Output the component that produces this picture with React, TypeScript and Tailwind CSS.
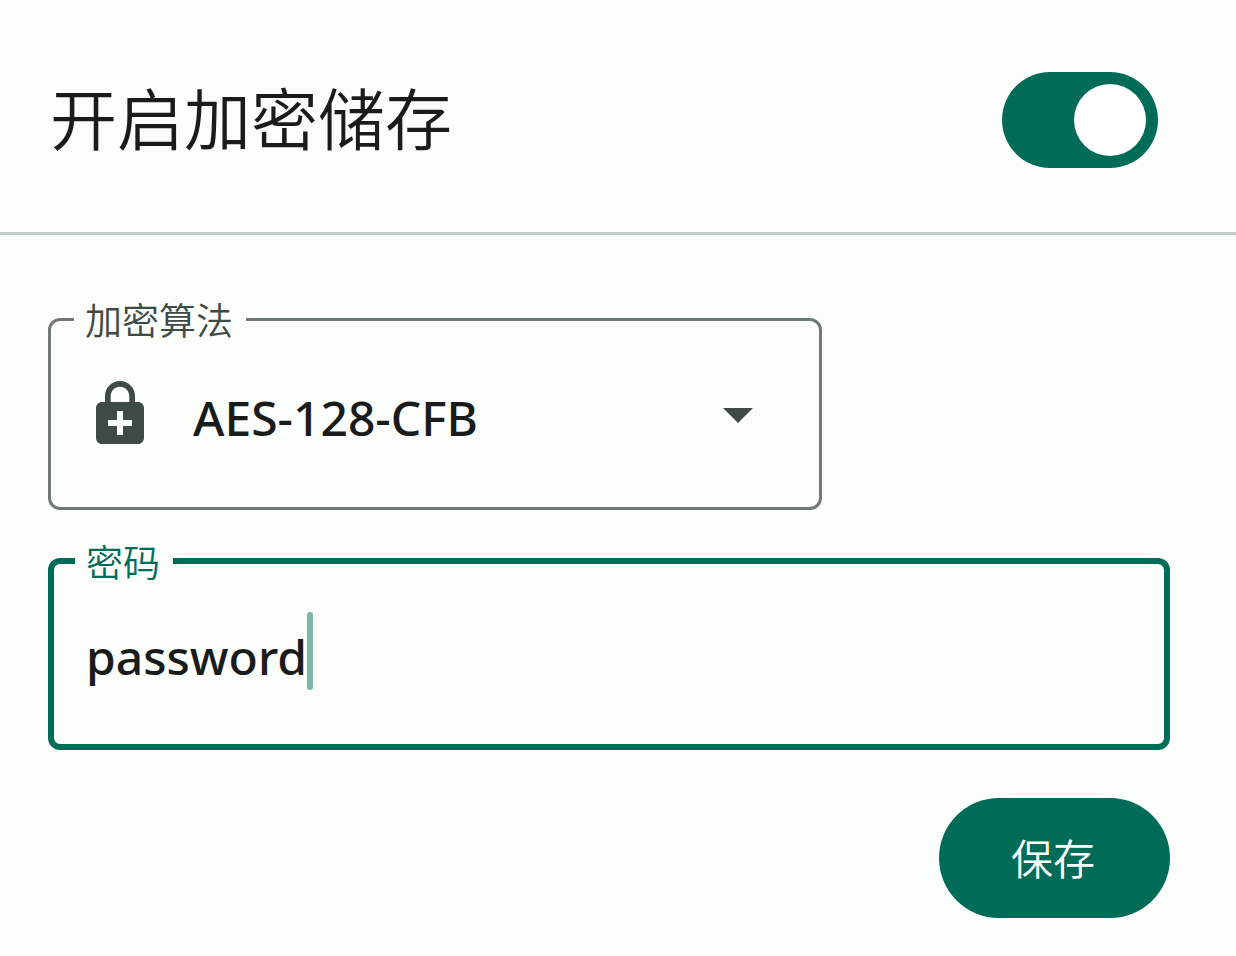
import { useState } from "react";
import { MdArrowDropDown, MdEnhancedEncryption } from "react-icons/md";

const ALGORITHMS = ["AES-128-CFB", "AES-192-CFB", "AES-256-CFB"];

export default function App() {
  const [enabled, setEnabled] = useState(true);
  const [algorithm, setAlgorithm] = useState(ALGORITHMS[0]);
  const [password, setPassword] = useState("password");

  return (
    <main className="min-h-screen bg-[#fbfdfa] font-['Noto_Sans','Noto_Sans_CJK_SC',sans-serif] text-[#191c1b]">
      <header className="flex items-center justify-between border-b-3 border-[#c2cbc6] pt-18 pr-[78px] pb-16 pl-[50px]">
        <label
          htmlFor="encryption"
          className="pb-2 font-['Noto_Sans_CJK_SC',sans-serif] text-[67px] leading-22 font-[350]"
        >
          开启加密储存
        </label>
        <input
          id="encryption"
          type="checkbox"
          role="switch"
          checked={enabled}
          onChange={(e) => setEnabled(e.target.checked)}
          className="flex h-24 w-39 shrink-0 appearance-none items-center rounded-full bg-[#bfc9c4] px-3 before:size-18 before:rounded-full before:bg-white checked:justify-end checked:bg-[#006c57]"
        />
      </header>

      <form
        className="flex flex-col gap-[33px] pt-[66px] pr-[66px] pb-9 pl-12"
        onSubmit={(e) => e.preventDefault()}
      >
        <fieldset className="w-[774px] max-w-full rounded-xl border-3 border-[#6f7975] px-[23px] text-[#3f4945]">
          <legend className="pr-[13px] pl-[11px] font-['Noto_Sans_CJK_SC',sans-serif] text-[37px] leading-9 font-[350]">
            <label htmlFor="algorithm">加密算法</label>
          </legend>
          <div className="flex h-[170px] items-center pr-[22px] pb-4 pl-[10px]">
            <MdEnhancedEncryption className="size-18 shrink-0" />
            <select
              id="algorithm"
              value={algorithm}
              onChange={(e) => setAlgorithm(e.target.value)}
              className="ml-[37px] h-22 min-w-0 flex-1 appearance-none bg-transparent pt-2 text-5xl font-medium text-[#191c1b] outline-none"
            >
              {ALGORITHMS.map((name) => (
                <option key={name}>{name}</option>
              ))}
            </select>
            <MdArrowDropDown className="pointer-events-none size-18 shrink-0" />
          </div>
        </fieldset>

        <fieldset className="rounded-xl border-6 border-[#006c57] px-[21px]">
          <legend className="pr-[13px] pl-[11px] font-['Noto_Sans_CJK_SC',sans-serif] text-[37px] leading-9 font-[350] text-[#006c57]">
            <label htmlFor="password">密码</label>
          </legend>
          <div className="flex h-[165px] items-center px-[11px] pb-[22px]">
            <input
              id="password"
              type="text"
              autoComplete="off"
              value={password}
              onChange={(e) => setPassword(e.target.value)}
              className="field-sizing-content h-22 max-w-full bg-transparent pt-3 text-5xl font-medium caret-transparent outline-none"
            />
            <span className="h-[78px] w-1.5 shrink-0 rounded-full bg-[#7db5a8]" />
          </div>
        </fieldset>

        <button
          type="submit"
          className="mt-[15px] h-30 self-end rounded-full bg-[#006c57] pr-[75px] pb-1 pl-18 font-['Noto_Sans_CJK_SC',sans-serif] text-[42px] font-[350] text-white"
        >
          保存
        </button>
      </form>
    </main>
  );
}
